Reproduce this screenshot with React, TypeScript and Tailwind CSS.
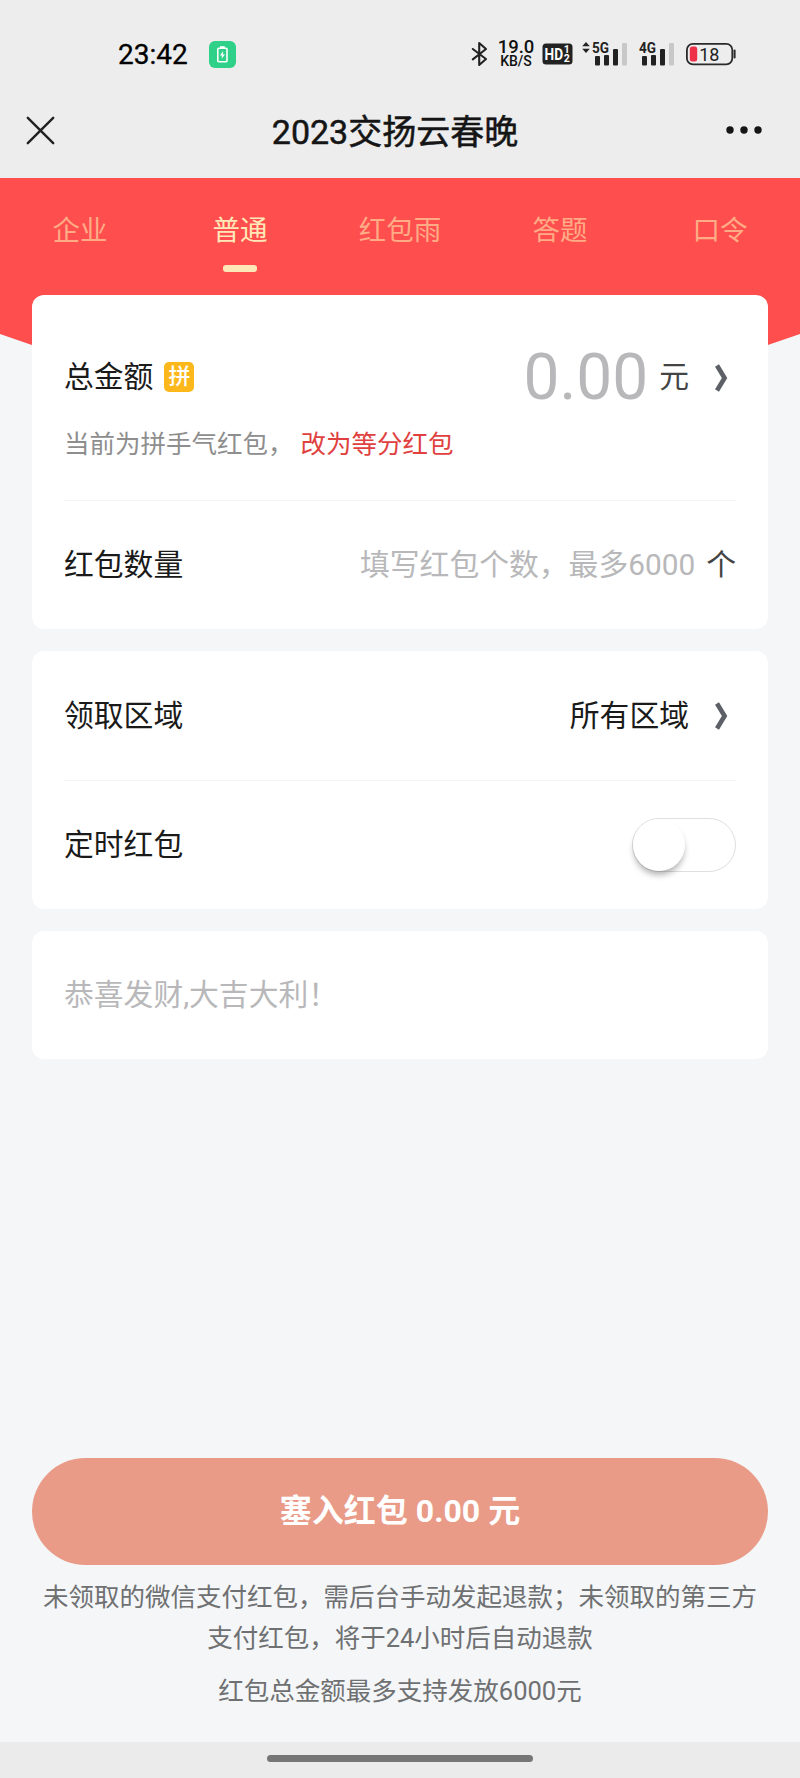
import { useState, type ReactNode } from 'react'
import clsx from 'clsx'

const tabs = ['企业', '普通', '红包雨', '答题', '口令']

function BluetoothIcon() {
  return (
    <svg width="17" height="26" viewBox="0 0 17 26" fill="none" stroke="#222" strokeWidth="2.1" strokeLinejoin="round" strokeLinecap="round">
      <path d="M1.8 8 15 18 8.2 24V2l6.8 6L1.8 18.3" />
    </svg>
  )
}

function SignalIcon({ label, arrows }: { label: string; arrows?: boolean }) {
  return (
    <svg width="46" height="26" viewBox="0 0 46 26" className="overflow-visible">
      {arrows && <path d="M5 1 8.8 5.2H1.2zM5 12 8.8 7.8H1.2z" fill="#222" />}
      <text x="11" y="12.4" textLength="17" lengthAdjust="spacingAndGlyphs" fontSize="15.5" fontWeight="700" fill="#222">
        {label}
      </text>
      <rect x="14" y="15" width="5" height="9.5" rx="1" fill="#222" />
      <rect x="23" y="14" width="5" height="10.5" rx="1" fill="#222" />
      <rect x="32" y="8" width="5" height="16.5" rx="1" fill="#222" />
      <rect x="41" y="2" width="5" height="22.5" rx="1" fill="#c8c8c8" />
    </svg>
  )
}

function BatteryIcon() {
  return (
    <svg width="50" height="24" viewBox="0 0 50 24">
      <rect x="0.9" y="1.9" width="45.4" height="20.4" rx="6" fill="none" stroke="#2a2a2a" strokeWidth="1.8" />
      <path d="M48.6 8.5v7" stroke="#2a2a2a" strokeWidth="2" strokeLinecap="round" />
      <rect x="3.8" y="4.6" width="7.4" height="15" rx="2.5" fill="#ee3049" />
      <text x="13.2" y="18.6" fontSize="18" fill="#222">18</text>
    </svg>
  )
}

function StatusBar() {
  return (
    <div className="flex h-14 items-center pl-[118px] pr-[64px]">
      <span className="w-[91px] pt-px text-[28px] leading-none text-black [-webkit-text-stroke:0.3px_#000]">23:42</span>
      <svg width="27" height="27" viewBox="0 0 27 27">
        <rect width="27" height="27" rx="6" fill="#2fd087" />
        <rect x="8.8" y="7.3" width="9.2" height="13.4" rx="1" fill="none" stroke="#fff" strokeWidth="1.6" />
        <path d="M11 5.2h4.8v2H11z" fill="#fff" />
        <path d="m14.2 10-3.2 4.4h2l-.4 3.4 3.4-4.4h-2.1z" fill="#fff" />
      </svg>
      <div className="ml-auto flex items-center">
        <BluetoothIcon />
        <div className="ml-[12px] flex w-8 flex-col items-center font-medium text-[#111]">
          <span className="-mt-px text-[18.5px] leading-[15px]">19.0</span>
          <span className="text-[14px] leading-[13px]">KB/S</span>
        </div>
        <svg className="ml-[10px] overflow-visible" width="31" height="22" viewBox="0 0 31 22">
          <rect x="0.5" y="0.5" width="30" height="21" rx="3.5" fill="#222" />
          <text x="2.5" y="17" fontSize="16.5" fontWeight="700" fill="#fff" textLength="18.5" lengthAdjust="spacingAndGlyphs">HD</text>
          <text x="21.8" y="10" fontSize="10.5" fontWeight="700" fill="#fff">1</text>
          <text x="21.8" y="19.4" fontSize="10.5" fontWeight="700" fill="#fff">2</text>
        </svg>
        <span className="ml-[8px]"><SignalIcon label="5G" arrows /></span>
        <span className="ml-[1px]"><SignalIcon label="4G" /></span>
        <span className="ml-[12px]"><BatteryIcon /></span>
      </div>
    </div>
  )
}

function TitleBar() {
  return (
    <div className="flex h-24 items-center justify-between pl-[26px] pr-[38px]">
      <svg width="29" height="29" viewBox="0 0 29 29" stroke="#222" strokeWidth="2.4" strokeLinecap="round">
        <path d="m1.8 1.8 25.4 25.4M27.2 1.8 1.8 27.2" />
      </svg>
      <h1 className="pt-1 pl-[9px] text-[34px] leading-none text-[#151515] [-webkit-text-stroke:0.5px_#151515]">2023交扬云春晚</h1>
      <svg width="36" height="8" viewBox="0 0 36 8" fill="#151515">
        <circle cx="4" cy="4" r="3.7" />
        <circle cx="18" cy="4" r="3.7" />
        <circle cx="32" cy="4" r="3.7" />
      </svg>
    </div>
  )
}

function Chevron() {
  return (
    <svg width="15" height="30" viewBox="0 0 15 30" fill="none" stroke="#5d6066" strokeWidth="4.6">
      <path d="M3 2.5 10.6 15 3 27.5" />
    </svg>
  )
}

function Card({ children, className }: { children: ReactNode; className?: string }) {
  return <section className={clsx('rounded-xl bg-white px-8', className)}>{children}</section>
}

export default function App() {
  const [active, setActive] = useState(1)
  const [timed, setTimed] = useState(false)

  return (
    <div className="flex h-[1778px] w-[800px] flex-col bg-[#f4f6f8] font-[Roboto,'Noto_Sans_CJK_SC',sans-serif] text-[29.8px] leading-none text-[#1a1a1a]">
      <header className="h-[178px] bg-[#ededed] pt-[26px]">
        <StatusBar />
        <TitleBar />
      </header>

      <main className="relative flex flex-1 flex-col">
        {/* red backdrop with the pointed bottom edge */}
        <div className="absolute inset-x-0 top-0 h-[294px] bg-[#ff4e4e] [clip-path:polygon(0_0,100%_0,100%_156px,50%_100%,0_156px)]" />

        <nav className="relative flex h-[117px]">
          {tabs.map((tab, i) => (
            <button
              key={tab}
              onClick={() => setActive(i)}
              className={clsx(
                'flex w-40 flex-col items-center pt-[35px] text-[27.5px] leading-9',
                i === active ? 'text-[#ffe7b8]' : 'text-[#ffab86]'
              )}
            >
              {tab}
              {i === active && <span className="mt-[16px] h-[7px] w-[34px] rounded-[3px] bg-[#ffe7b8]" />}
            </button>
          ))}
        </nav>

        <div className="relative flex flex-col gap-[22px] px-8">
          <Card>
            <div className="h-[206px] border-b border-[#f4f4f5] pt-[42px]">
              <div className="flex h-20 items-center">
                <span>总金额</span>
                <span className="ml-[11px] flex size-[30px] items-center justify-center rounded-[5px] bg-[#fcb81b] text-[22px] font-medium text-white">
                  拼
                </span>
                <span className="ml-auto pt-px text-[64px] text-[#b8b8ba]">0.00</span>
                <span className="ml-[11px] mr-[25px] text-[#444]">元</span>
                <span className="mr-[7px] pt-px"><Chevron /></span>
              </div>
              <p className="mt-[9px] flex text-[25.5px] leading-9 text-[#8e8e8e]">
                当前为拼手气红包，
                <a className="ml-[7px] text-[#e04140]">改为等分红包</a>
              </p>
            </div>
            <div className="flex h-32 items-center justify-between">
              <span>红包数量</span>
              <span className="flex">
                <span className="mr-[11px] text-[#b8b8ba]">填写红包个数，最多6000</span>
                <span className="text-[#444]">个</span>
              </span>
            </div>
          </Card>

          <Card>
            <div className="flex h-[130px] items-center border-b border-[#f4f4f5]">
              <span>领取区域</span>
              <span className="ml-auto mr-[25px] pt-px">所有区域</span>
              <span className="mr-[7px]"><Chevron /></span>
            </div>
            <div className="flex h-32 items-center justify-between">
              <span>定时红包</span>
              <button
                onClick={() => setTimed(!timed)}
                className={clsx(
                  'flex h-[54px] w-[104px] rounded-full border border-[#dfdfdf]',
                  timed ? 'justify-end bg-[#ff4e4e]' : 'bg-white'
                )}
              >
                <span className="size-[52px] rounded-full bg-white shadow-[0_5px_6px_-1px_rgba(0,0,0,0.3)]" />
              </button>
            </div>
          </Card>

          <Card className="flex h-32 items-center text-[#b8b8ba]">恭喜发财,大吉大利！</Card>
        </div>

        <footer className="mt-auto px-8 pb-[30px] text-center text-[25.5px] leading-[41px] text-[#6f7072]">
          <button className="mb-[12px] block h-[107px] w-full rounded-full bg-[#e99b88] text-[32px] font-bold text-white">
            塞入红包 0.00 元
          </button>
          <p>
            未领取的微信支付红包，需后台手动发起退款；未领取的第三方
            <br />
            支付红包，将于24小时后自动退款
          </p>
          <p className="mt-[12px]">红包总金额最多支持发放6000元</p>
        </footer>
      </main>

      <div className="flex h-9 justify-center bg-[#ebebeb] pt-[13px]">
        <span className="h-[7px] w-[266px] rounded-full bg-[#767676]" />
      </div>
    </div>
  )
}
